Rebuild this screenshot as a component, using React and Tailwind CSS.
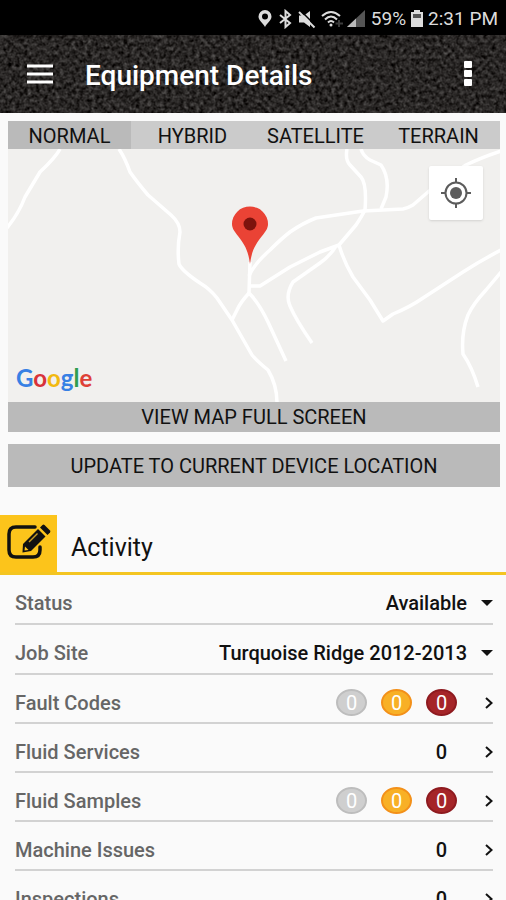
import React, { useState } from 'react';
import { clsx } from 'clsx';

const mapTypes = ['NORMAL', 'HYBRID', 'SATELLITE', 'TERRAIN'];

const selectRows = [
  { id: 'status', label: 'Status', options: ['Available', 'In Use', 'Down'] },
  { id: 'job-site', label: 'Job Site', options: ['Turquoise Ridge 2012-2013', 'Unassigned'] },
];

const linkRows = [
  { id: 'fault-codes', label: 'Fault Codes', levels: [0, 0, 0] },
  { id: 'fluid-services', label: 'Fluid Services', count: 0 },
  { id: 'fluid-samples', label: 'Fluid Samples', levels: [0, 0, 0] },
  { id: 'machine-issues', label: 'Machine Issues', count: 0 },
  { id: 'inspections', label: 'Inspections', count: 0 },
];

const levelStyles = [
  'bg-[#cfcfcf] border-[#bdbdbd]',
  'bg-[#f8b026] border-[#f39019]',
  'bg-[#a52528] border-[#8e1a1f]',
];

const roads = [
  'M60 149 Q56 157 40 172 L25 197 Q19 213 7 228',
  'M119 149 Q125 158 130 172 Q137 182 148 195 L171 215 Q180 223 180 232 Q177 248 179 264 Q182 271 200 283 Q210 289 217 298 L232 320 L252 355 Q257 361 268 370 Q277 385 277 403',
  'M250 262 L249 293 Q259 303 268 322 L286 361',
  'M249 293 Q240 303 237 310 L232 320',
  'M249 276 Q254 264 270 250 Q281 239 290 232 Q303 223 316 218 L363 211 L403 209 Q408 208 413 205 L428 192 L466 165 Q480 158 501 151',
  'M347 149 Q345 160 350 165 L361 177 Q367 184 365 210 Q362 216 356 225 L339 245 L320 252 L290 267 L260 286 L250 286',
  'M336 246 Q330 256 320 263 L293 282 Q285 295 290 306 Q296 320 312 343',
  'M361 149 Q363 156 370 160 L381 165 Q390 178 386 197 L381 209',
  'M339 245 Q344 262 353 277 L370 300 L383 321 L393 314 Q410 307 423 298 L463 272 Q480 261 501 250',
  'M501 272 L486 290 Q473 304 468 315 Q461 333 463 354 Q472 367 478 387',
];

function StatusBar() {
  return (
    <div className="flex h-[35px] shrink-0 items-center justify-end gap-1 bg-black pt-0.5 pr-2 text-[#dcdcdc]">
      <svg className="h-5 w-4" viewBox="0 0 16 20" aria-hidden="true">
        <path d="M8 18C6 14 1.500 11.500 1.500 7.500a6.500 6.500 0 0 1 13 0C14.500 11.500 10 14 8 18ZM8 4.500a3 3 0 1 0 0 6a3 3 0 0 0 0-6Z" fill="currentColor" fillRule="evenodd" />
      </svg>
      <svg className="h-5 w-4" viewBox="0 0 16 20" fill="none" aria-hidden="true">
        <path d="M3 6l10 8-4.500 4V2L13 6 3 14" stroke="currentColor" strokeWidth="2" />
      </svg>
      <svg className="h-5 w-5" viewBox="0 0 20 20" aria-hidden="true">
        <path d="M2 6.500h5l6-4.500v16l-6-4.500H2Z" fill="currentColor" />
        <path d="M3.500 1.500l15 15" stroke="#000" strokeWidth="1.500" />
        <path d="M2 3l15.500 15.500" stroke="currentColor" strokeWidth="2" />
      </svg>
      <svg className="h-5 w-[22px]" viewBox="0 0 22 20" fill="none" aria-hidden="true">
        <path d="M1 7q9-8 18 0M4 10.500q6-6 12 0M7 13.500q3-3 6 0" stroke="currentColor" strokeWidth="2" />
        <circle cx="10" cy="16" r="1.500" fill="currentColor" />
        <path d="M18 11v7M14.500 14.500H22" stroke="#3c3c3c" strokeWidth="2" />
      </svg>
      <svg className="h-5 w-[18px]" viewBox="0 0 18 20" aria-hidden="true">
        <path d="M0 18 18 1v17Z" fill="#555" />
        <path d="M0 18 9 9.500V18Z" fill="#bbb" />
      </svg>
      <span className="ml-0.5 text-[19px] leading-6">59%</span>
      <svg className="h-5 w-[14px]" viewBox="0 0 14 20" aria-hidden="true">
        <path d="M4 1h6v2h3v15H1V3h3Z" fill="currentColor" />
        <path d="M3 5h8v4H3Z" fill="#555" />
      </svg>
      <span className="text-[19px] leading-6">2:31 PM</span>
    </div>
  );
}

function Header() {
  return (
    <header className="relative flex h-[78px] shrink-0 items-center bg-[#242220] pr-6 pl-6 text-white">
      {/* Asphalt texture */}
      <svg className="absolute inset-0 h-full w-full" aria-hidden="true">
        <filter id="asphalt" x="0" y="0" width="100%" height="100%" colorInterpolationFilters="sRGB">
          <feTurbulence type="fractalNoise" baseFrequency="0.25" numOctaves="4" seed="8" />
          <feColorMatrix values="0.35 0.25 0 0 -0.14  0.35 0.25 0 0 -0.15  0.35 0.25 0 0 -0.155  0 0 0 0 1" />
        </filter>
        <rect width="100%" height="100%" filter="url(#asphalt)" />
      </svg>
      <button type="button" aria-label="Menu" className="relative flex h-8 w-8 items-center justify-center">
        <svg width="26" height="20" viewBox="0 0 26 20" aria-hidden="true">
          <path d="M0 2h26M0 10h26M0 18h26" stroke="currentColor" strokeWidth="3" />
        </svg>
      </button>
      <h1 className="relative ml-[29px] flex-1 pt-1 text-[28px] leading-8 font-medium">Equipment Details</h1>
      <button type="button" aria-label="More options" className="relative flex h-8 w-7 items-center justify-center">
        <svg width="8" height="26" viewBox="0 0 8 26" fill="currentColor" aria-hidden="true">
          <rect width="8" height="7" rx="1" />
          <rect y="9" width="8" height="7" rx="1" />
          <rect y="18" width="8" height="7" rx="1" />
        </svg>
      </button>
    </header>
  );
}

function EquipmentMap() {
  return (
    <div className="relative h-[253px] overflow-hidden bg-[#f1f0ee]">
      <svg className="h-full w-full" viewBox="8 149 492 253" preserveAspectRatio="xMidYMid slice" aria-hidden="true">
        <g fill="none" stroke="#fff" strokeWidth="3.500" strokeLinejoin="round">
          {roads.map((d) => <path key={d} d={d} />)}
        </g>
        <path
          d="M250 264C248 249 244 244 238 236C234 231 232 228 232 224a18 17.500 0 0 1 36 0C268 228 266 231 262 236C256 244 252 249 250 264Z"
          fill="#ea4335"
        />
        <circle cx="250" cy="224" r="6.500" fill="#7d130d" />
      </svg>
      <span className="absolute bottom-2 left-2 font-['Lato',sans-serif] text-[24px] leading-8 font-bold" translate="no">
        <span className="text-[#3780e4]">G</span>
        <span className="text-[#d8333a]">o</span>
        <span className="text-[#f2b90f]">o</span>
        <span className="text-[#3780e4]">g</span>
        <span className="text-[#2f9d4e]">l</span>
        <span className="text-[#de4036]">e</span>
      </span>
      <button
        type="button"
        aria-label="My location"
        className="absolute top-[17px] right-[17px] flex h-[54px] w-[54px] items-center justify-center rounded-xs bg-white text-[#5c5c5c] shadow"
      >
        <svg width="30" height="30" viewBox="0 0 30 30" fill="none" stroke="currentColor" strokeWidth="2" aria-hidden="true">
          <circle cx="15" cy="15" r="10.500" />
          <path d="M15 0v5M15 25v5M0 15h5M25 15h5" />
          <circle cx="15" cy="15" r="6" fill="currentColor" stroke="none" />
        </svg>
      </button>
    </div>
  );
}

export default function App() {
  const [mapType, setMapType] = useState('NORMAL');

  return (
    <div className="flex h-screen flex-col bg-[#fafafa] font-['Roboto',sans-serif] text-[#111]">
      <StatusBar />
      <Header />

      <main className="min-h-0 flex-1 overflow-y-auto [scrollbar-width:none]">
        <section className="pt-2 pr-1.5 pl-2">
          <div className="flex bg-[#cbcbcb]">
            {mapTypes.map((type) => (
              <button
                key={type}
                type="button"
                aria-pressed={mapType === type}
                onClick={() => setMapType(type)}
                className={clsx('h-7 flex-1 basis-0 pt-0.5 text-[20px] leading-6', mapType === type && 'bg-[#bababa]')}
              >
                {type}
              </button>
            ))}
          </div>
          <EquipmentMap />
          <button type="button" className="block h-[30px] w-full bg-[#bababa] text-[20px] leading-7">
            VIEW MAP FULL SCREEN
          </button>
          <button type="button" className="mt-3 block h-[43px] w-full bg-[#bababa] text-[20px] leading-7">
            UPDATE TO CURRENT DEVICE LOCATION
          </button>
        </section>

        <section className="mt-7">
          {/* Section heading */}
          <div className="flex items-center border-b-[3px] border-[#f4c521]">
            <div className="flex h-[57px] w-[57px] items-center justify-center bg-[#fcc41b] pb-1">
              <svg width="44" height="38" viewBox="0 0 44 38" fill="none" aria-hidden="true">
                <path d="M28 4H9Q2 4 2 11V27Q2 34 9 34H26Q33 34 33 27V24" stroke="#111" strokeWidth="3.500" strokeLinecap="round" />
                <path d="M31 6 38.500 13.500 24 28 15.500 29.500 16 21Z" fill="#111" />
                <path d="M33 4.500 35.500 2Q36.500 1 37.500 2L43 7.500Q43.800 8.500 43 9.500L40.500 12Z" fill="#111" />
                <path d="M22 19 30.500 10.500" stroke="#c79c24" strokeWidth="1.500" />
                <path d="M18 23.500 21.500 27 17.500 27.500Z" fill="#fcc41b" />
              </svg>
            </div>
            <h2 className="mt-2 ml-[14px] text-[25px] leading-8">Activity</h2>
          </div>

          <div className="pr-[13px] pl-[15px] text-[20px] leading-6 font-medium">
            {selectRows.map((row) => (
              <div key={row.id} className="flex h-[50px] items-center border-b-2 border-[#d2d2d2] pt-2">
                <label htmlFor={row.id} className="text-[#666]">{row.label}</label>
                <div className="relative flex-1">
                  <select id={row.id} className="w-full appearance-none bg-transparent pr-[26px] [text-align-last:right]">
                    {row.options.map((option) => <option key={option}>{option}</option>)}
                  </select>
                  <svg className="pointer-events-none absolute top-[9px] right-0" width="12" height="6" viewBox="0 0 12 6" aria-hidden="true">
                    <path d="M0 0h12L6 6Z" fill="currentColor" />
                  </svg>
                </div>
              </div>
            ))}

            {linkRows.map((row) => (
              <a key={row.id} href={`#${row.id}`} className="flex h-[49px] items-center border-b-2 border-[#d2d2d2] pt-2">
                <span className="flex-1 text-[#666]">{row.label}</span>
                {row.levels ? (
                  <span className="flex gap-[14px]">
                    {row.levels.map((value, i) => (
                      <span
                        key={i}
                        className={clsx(
                          'flex h-[27px] w-[31px] items-center justify-center rounded-[50%] border-2 font-normal text-white',
                          levelStyles[i]
                        )}
                      >
                        {value}
                      </span>
                    ))}
                  </span>
                ) : (
                  <span className="w-[31px] text-center">{row.count}</span>
                )}
                <svg className="ml-7 shrink-0" width="8" height="12" viewBox="0 0 8 12" fill="none" aria-hidden="true">
                  <path d="M1 1l5.500 5L1 11" stroke="currentColor" strokeWidth="2" />
                </svg>
              </a>
            ))}
          </div>
        </section>
      </main>
    </div>
  );
}
